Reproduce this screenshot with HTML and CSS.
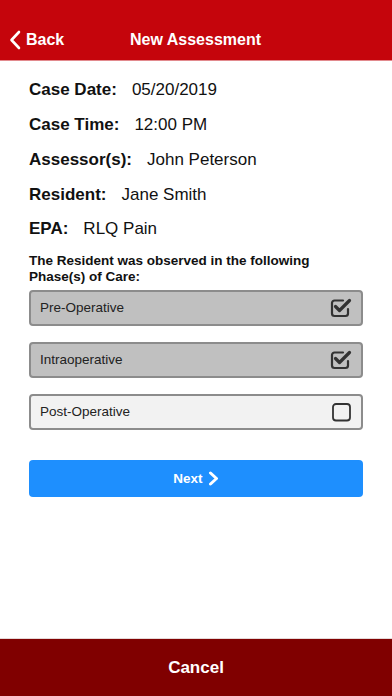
FILE: index.html
```html
<!DOCTYPE html>
<html>
<head>
<meta charset="utf-8">
<link rel="stylesheet" href="styles.css">
</head>
<body>
<div class="screen">
  <header class="topbar">
    <div class="back">
      <svg class="back-icon" width="12" height="20" viewBox="0 0 12 20"><polyline points="10,2 2.5,10 10,18" fill="none" stroke="#fff" stroke-width="2.6" stroke-linecap="round" stroke-linejoin="round"/></svg>
      <span>Back</span>
    </div>
    <div class="title">New Assessment</div>
  </header>
  <main class="content">
    <div class="row"><span class="label">Case Date:</span><span class="value">05/20/2019</span></div>
    <div class="row"><span class="label">Case Time:</span><span class="value">12:00 PM</span></div>
    <div class="row"><span class="label">Assessor(s):</span><span class="value">John Peterson</span></div>
    <div class="row"><span class="label">Resident:</span><span class="value">Jane Smith</span></div>
    <div class="row"><span class="label">EPA:</span><span class="value">RLQ Pain</span></div>
    <p class="heading">The Resident was observed in the following Phase(s) of Care:</p>
    <div class="options">
      <div class="option checked">
        <span>Pre-Operative</span>
        <svg class="chk" width="22" height="20" viewBox="0 0 22 20"><path d="M13 2.5 H4.5 a2.5 2.5 0 0 0 -2.5 2.5 v10.5 a2.5 2.5 0 0 0 2.5 2.5 h11 a2.5 2.5 0 0 0 2.5 -2.5 v-4.5" fill="none" stroke="#333" stroke-width="2.2" stroke-linecap="round"/><path d="M5.5 8.5 L9.5 12.5 L19.5 2.5" fill="none" stroke="#333" stroke-width="3.2" stroke-linecap="round" stroke-linejoin="round"/></svg>
      </div>
      <div class="option checked">
        <span>Intraoperative</span>
        <svg class="chk" width="22" height="20" viewBox="0 0 22 20"><path d="M13 2.5 H4.5 a2.5 2.5 0 0 0 -2.5 2.5 v10.5 a2.5 2.5 0 0 0 2.5 2.5 h11 a2.5 2.5 0 0 0 2.5 -2.5 v-4.5" fill="none" stroke="#333" stroke-width="2.2" stroke-linecap="round"/><path d="M5.5 8.5 L9.5 12.5 L19.5 2.5" fill="none" stroke="#333" stroke-width="3.2" stroke-linecap="round" stroke-linejoin="round"/></svg>
      </div>
      <div class="option">
        <span>Post-Operative</span>
        <svg class="chk" width="22" height="20" viewBox="0 0 22 20"><rect x="3" y="2" width="17" height="16.5" rx="3" fill="none" stroke="#333" stroke-width="1.8"/></svg>
      </div>
    </div>
    <button class="next">Next <svg width="11" height="15" viewBox="0 0 11 15"><polyline points="2.5,2 8.5,7.5 2.5,13" fill="none" stroke="#fff" stroke-width="3" stroke-linecap="round" stroke-linejoin="round"/></svg></button>
  </main>
  <footer class="cancel">Cancel</footer>
</div>
</body>
</html>
```

FILE: styles.css
```css
* { box-sizing: border-box; }
html, body { margin: 0; padding: 0; }
body {
  font-family: "Liberation Sans", Arial, sans-serif;
  background: #fff;
  color: #111;
}
.screen {
  width: 392px;
  height: 696px;
  display: flex;
  flex-direction: column;
  overflow: hidden;
}
.topbar {
  height: 61px;
  background: #c5050c;
  border-bottom: 1px solid #e28a8e;
  display: flex;
  align-items: center;
  padding: 20px 0 0 9px;
  color: #fff;
  font-weight: bold;
}
.back {
  display: flex;
  align-items: center;
  gap: 5px;
  font-size: 16px;
  width: 121px;
}
.back-icon { display: block; }
.title {
  font-size: 16px;
}
.content {
  flex: 1;
  padding: 12px 29px 0 29px;
}
.row {
  height: 34.75px;
  display: flex;
  align-items: center;
  font-size: 17px;
}
.label {
  font-weight: bold;
  margin-right: 15px;
}
.heading {
  margin: 6px 0 5px 0;
  max-width: 300px;
  font-size: 13.5px;
  font-weight: bold;
  line-height: 16px;
}
.options {
  display: flex;
  flex-direction: column;
  gap: 16px;
}
.option {
  height: 36px;
  border: 2px solid #8c8c8c;
  border-radius: 4px;
  background: #f2f2f2;
  display: flex;
  align-items: center;
  justify-content: space-between;
  padding: 0 9px 0 9px;
  font-size: 13.5px;
  color: #222;
}
.option.checked { background: #c0c0c0; }
.chk { display: block; }
.next {
  margin-top: 30px;
  width: 100%;
  height: 37px;
  border: none;
  border-radius: 4px;
  background: #1e8ffe;
  color: #fff;
  font-family: "Liberation Sans", Arial, sans-serif;
  font-weight: bold;
  font-size: 13.5px;
  display: flex;
  align-items: center;
  justify-content: center;
  gap: 5px;
  padding: 0;
}
.next svg { display: block; }
.cancel {
  height: 58px;
  background: #800000;
  border-top: 1px solid #e4d8d8;
  color: #fff;
  font-weight: bold;
  font-size: 17px;
  display: flex;
  align-items: center;
  justify-content: center;
}
```
